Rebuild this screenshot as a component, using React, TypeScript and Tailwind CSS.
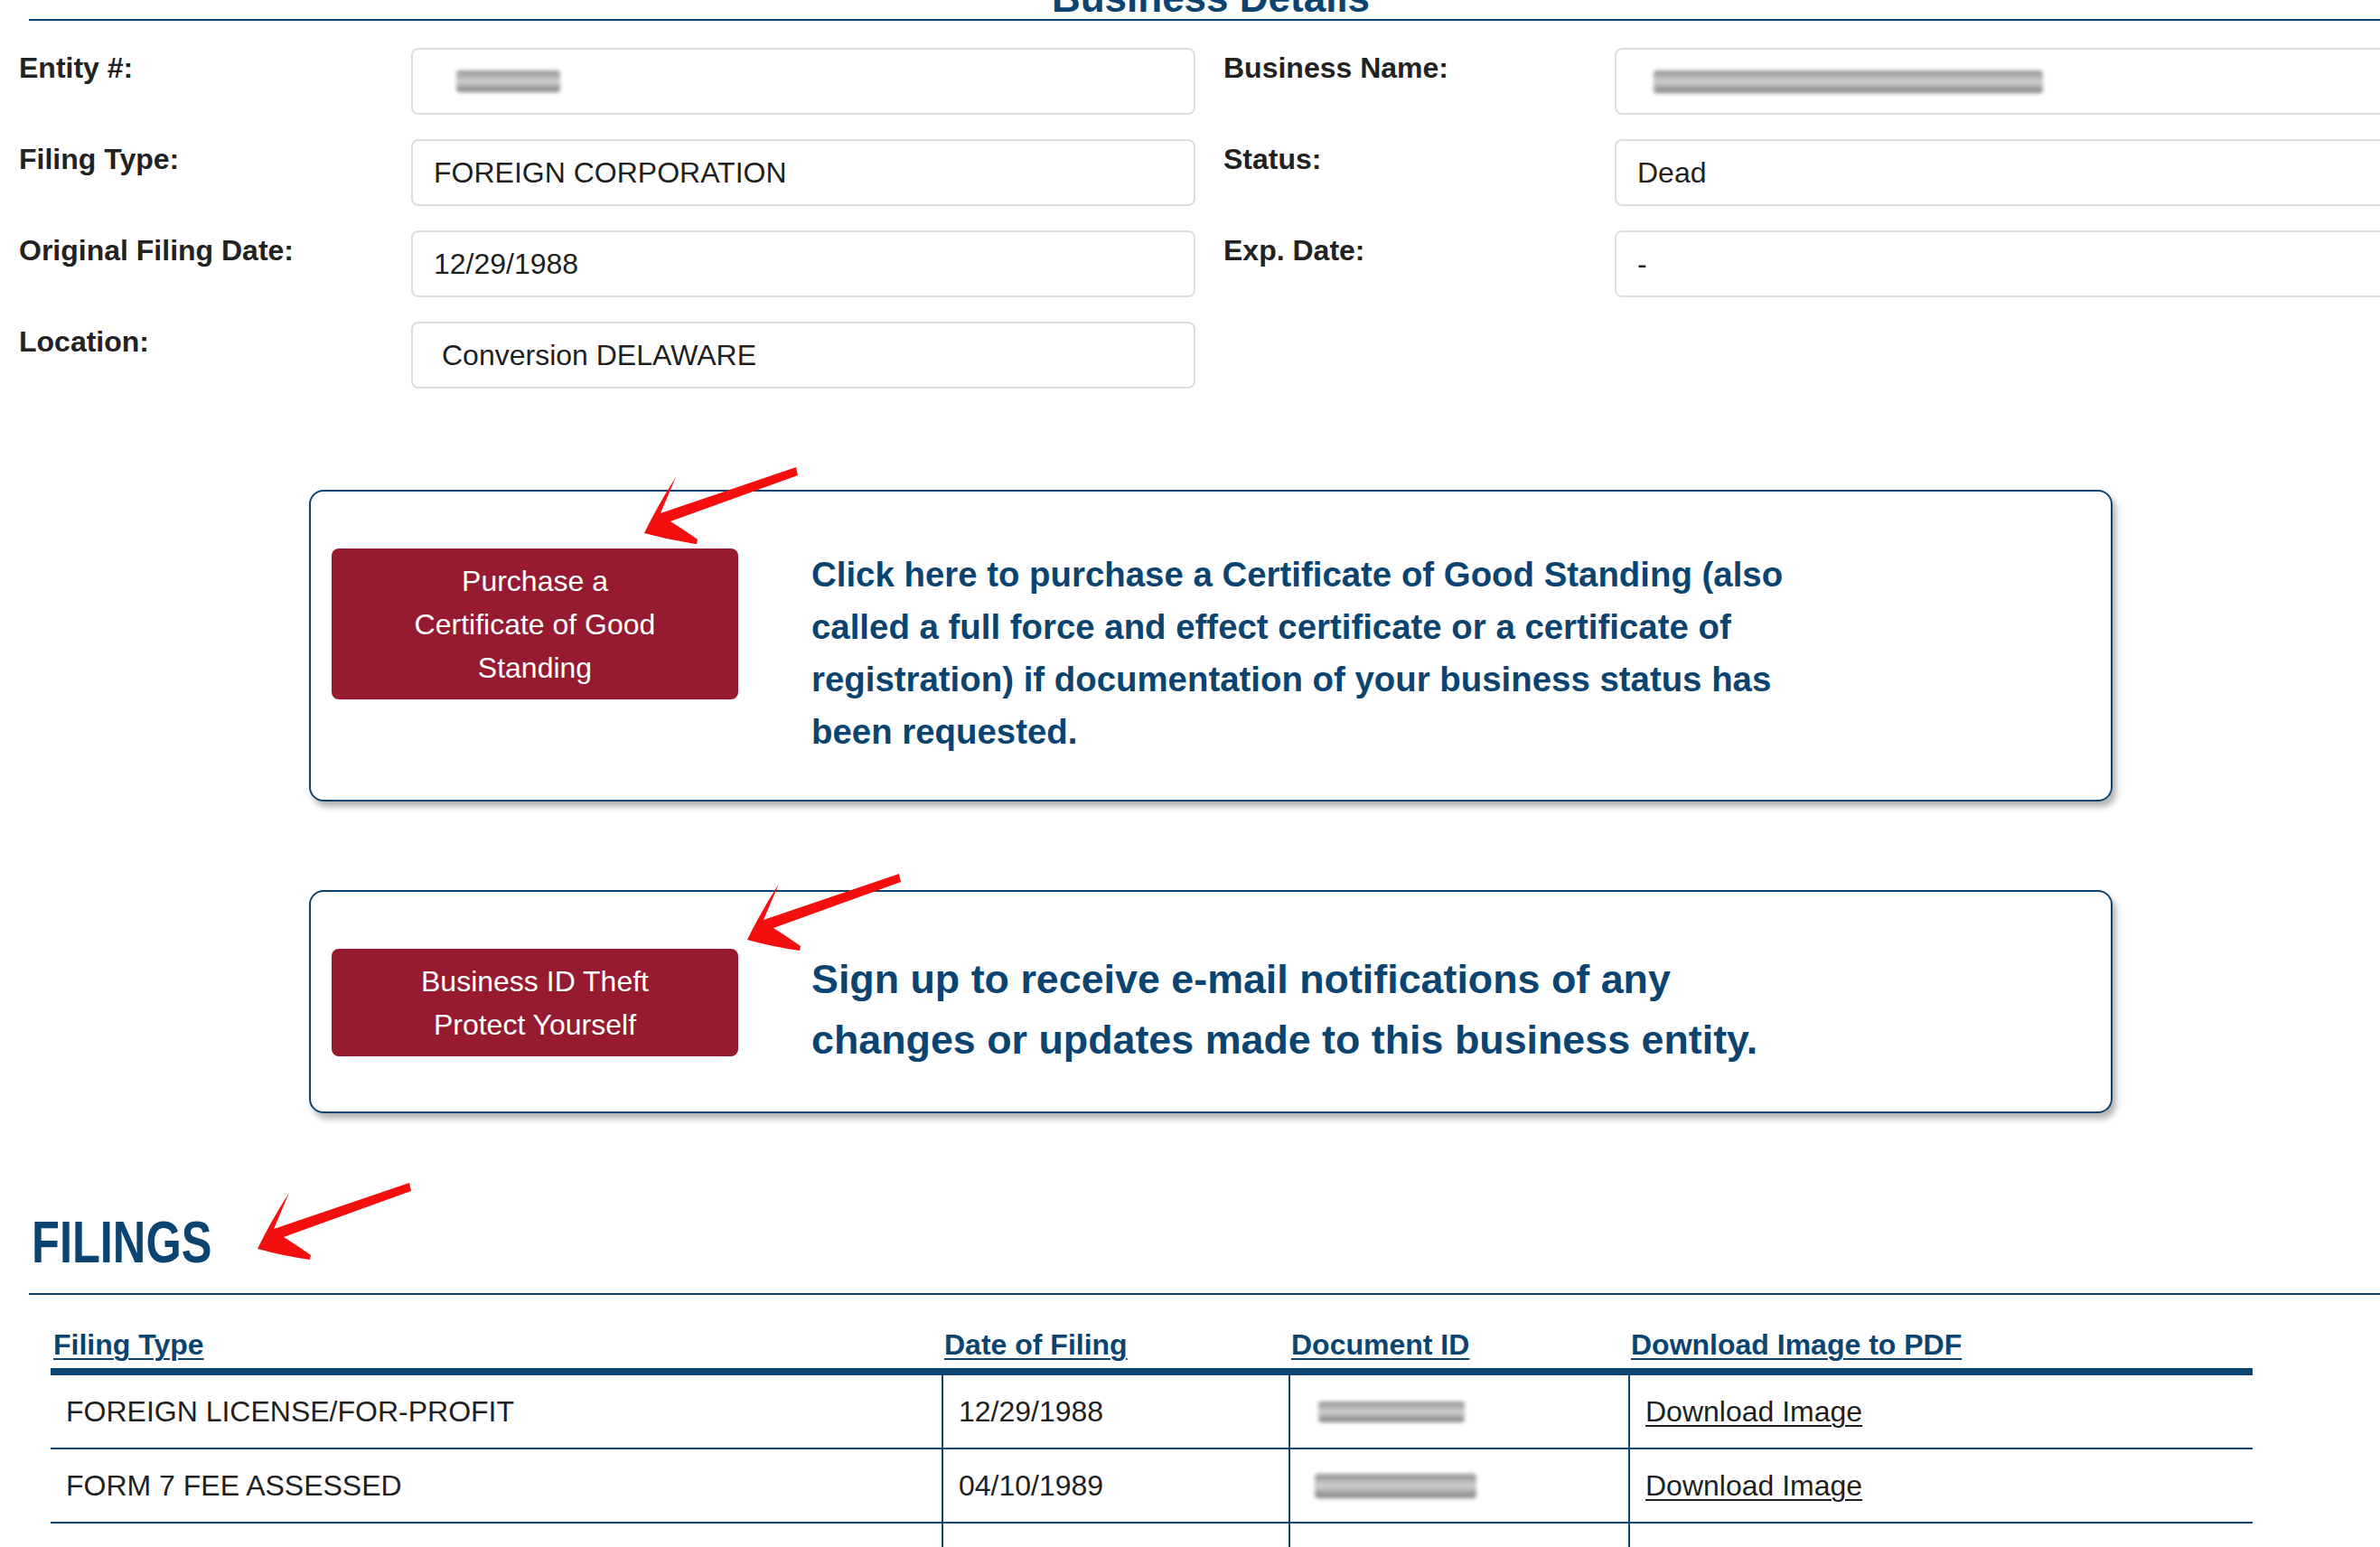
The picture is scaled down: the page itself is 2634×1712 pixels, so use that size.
import type { ReactNode } from "react";

type Row = {
  label: string;
  value: ReactNode;
  rightLabel?: string;
  rightValue?: ReactNode;
};

function Smudge({ className }: { className: string }) {
  return (
    <span
      className={`block rounded-sm bg-gradient-to-b from-[#8f8f8f] via-[#d2d2d2] to-[#7d7d7d] blur-[2px] ${className}`}
    />
  );
}

function Arrow({ className }: { className: string }) {
  return (
    <svg
      className={`pointer-events-none absolute ${className}`}
      width="185"
      height="95"
      viewBox="0 0 185 95"
    >
      <path
        d="M42,17 L25,57 L175,6 L177,15 L36,66 Q52,76 66,86 L65,91 Q36,87 7,79 Q22,48 42,17 Z"
        fill="#f40f0f"
      />
    </svg>
  );
}

function Field({ children }: { children: ReactNode }) {
  return (
    <div className="flex h-[74px] w-[868px] shrink-0 items-center rounded-[8px] border-2 border-[#dddddd] px-[23px] text-[32px] text-[#1f1f1f]">
      {children}
    </div>
  );
}

function Label({ children, className = "" }: { children: ReactNode; className?: string }) {
  return (
    <div className={`shrink-0 text-[32px] font-bold leading-[44px] text-[#222] ${className}`}>
      {children}
    </div>
  );
}

const rows: Row[] = [
  {
    label: "Entity #:",
    value: <Smudge className="ml-[25px] h-[24px] w-[115px]" />,
    rightLabel: "Business Name:",
    rightValue: <Smudge className="ml-[18px] h-[25px] w-[431px]" />,
  },
  {
    label: "Filing Type:",
    value: "FOREIGN CORPORATION",
    rightLabel: "Status:",
    rightValue: "Dead",
  },
  {
    label: "Original Filing Date:",
    value: "12/29/1988",
    rightLabel: "Exp. Date:",
    rightValue: "-",
  },
  {
    label: "Location:",
    value: <span className="ml-[9px]">Conversion DELAWARE</span>,
  },
];

const filings = [
  { type: "FOREIGN LICENSE/FOR-PROFIT", date: "12/29/1988", smudge: "ml-[14px] h-[23px] w-[162px]" },
  { type: "FORM 7 FEE ASSESSED", date: "04/10/1989", smudge: "ml-[10px] h-[27px] w-[179px]" },
];

export default function App() {
  return (
    <div className="relative h-[1712px] w-[2634px] overflow-hidden bg-white font-['Liberation_Sans',Arial,sans-serif] text-[#222]">
      <div className="ml-[32px] flex h-[23px] w-[2616px] shrink-0 items-start justify-center border-b-2 border-[#0b4470]">
        <h2 className="-mt-[24px] text-[44px] font-bold leading-[44px] text-[#0b4470]">Business Details</h2>
      </div>

      <div className="ml-[21px] mt-[30px] flex flex-col gap-[27px]">
        {rows.map((r) => (
          <div key={r.label} className="flex">
            <Label className="w-[434px]">{r.label}</Label>
            <Field>{r.value}</Field>
            {r.rightLabel && (
              <>
                <Label className="ml-[31px] w-[433px]">{r.rightLabel}</Label>
                <Field>{r.rightValue}</Field>
              </>
            )}
          </div>
        ))}
      </div>

      <div className="ml-[342px] mt-[112px] flex w-[1996px] items-start rounded-[16px] border-2 border-[#0b4470] pb-[46px] pl-[23px] pt-[63px] shadow-[4px_6px_7px_rgba(0,0,0,0.3)]">
        <button
          type="button"
          className="flex h-[167px] w-[450px] shrink-0 items-center justify-center rounded-[8px] bg-[#961b31] text-center text-[32px] leading-[48px] text-white"
        >
          Purchase a
          <br />
          Certificate of Good
          <br />
          Standing
        </button>
        <p className="ml-[81px] w-[1100px] text-[38.4px] font-bold leading-[58px] text-[#0b4470]">
          Click here to purchase a Certificate of Good Standing (also called a full force and effect certificate or a
          certificate of registration) if documentation of your business status has been requested.
        </p>
      </div>

      <div className="ml-[342px] mt-[98px] flex w-[1996px] items-start rounded-[16px] border-2 border-[#0b4470] pb-[46px] pl-[23px] pt-[63px] shadow-[4px_6px_7px_rgba(0,0,0,0.3)]">
        <button
          type="button"
          className="flex h-[119px] w-[450px] shrink-0 items-center justify-center rounded-[8px] bg-[#961b31] text-center text-[32px] leading-[48px] text-white"
        >
          Business ID Theft
          <br />
          Protect Yourself
        </button>
        <p className="ml-[81px] w-[1100px] text-[44.8px] font-bold leading-[67px] text-[#0b4470]">
          Sign up to receive e-mail notifications of any changes or updates made to this business entity.
        </p>
      </div>

      <div className="ml-[32px] mt-[111px] w-[2616px] border-b-2 border-[#0b4470] pb-[24px]">
        <h2 className="ml-[3px] inline-block origin-left scale-x-[0.79] text-[64px] font-bold leading-[64px] text-[#0b4470]">
          FILINGS
        </h2>
      </div>

      <div className="ml-[56px] mt-[33px] w-[2437px]">
        <div className="grid grid-cols-[986px_384px_376px_691px] border-b-8 border-[#0b4470] pb-[4px] text-[32px] font-bold leading-[44px] text-[#0b4470]">
          {["Filing Type", "Date of Filing", "Document ID", "Download Image to PDF"].map((h) => (
            <div key={h} className="pl-[3px]">
              <span className="underline decoration-2 underline-offset-[4px]">{h}</span>
            </div>
          ))}
        </div>
        {filings.map((f) => (
          <div
            key={f.type}
            className="grid h-[82px] grid-cols-[986px_384px_376px_691px] border-b-2 border-[#0b4470] text-[32px] text-[#1f1f1f]"
          >
            <div className="flex items-center pl-[17px]">{f.type}</div>
            <div className="flex items-center border-l-2 border-[#0b4470] pl-[17px]">{f.date}</div>
            <div className="flex items-center border-l-2 border-[#0b4470] pl-[17px]">
              <Smudge className={f.smudge} />
            </div>
            <div className="flex items-center border-l-2 border-[#0b4470] pl-[17px]">
              <a href="#" className="underline decoration-2 underline-offset-[4px]">
                Download Image
              </a>
            </div>
          </div>
        ))}
        <div className="grid h-[82px] grid-cols-[986px_384px_376px_691px]">
          <div />
          <div className="border-l-2 border-[#0b4470]" />
          <div className="border-l-2 border-[#0b4470]" />
          <div className="border-l-2 border-[#0b4470]" />
        </div>
      </div>

      <Arrow className="left-[706px] top-[511px]" />
      <Arrow className="left-[820px] top-[961px]" />
      <Arrow className="left-[278px] top-[1303px]" />
    </div>
  );
}
